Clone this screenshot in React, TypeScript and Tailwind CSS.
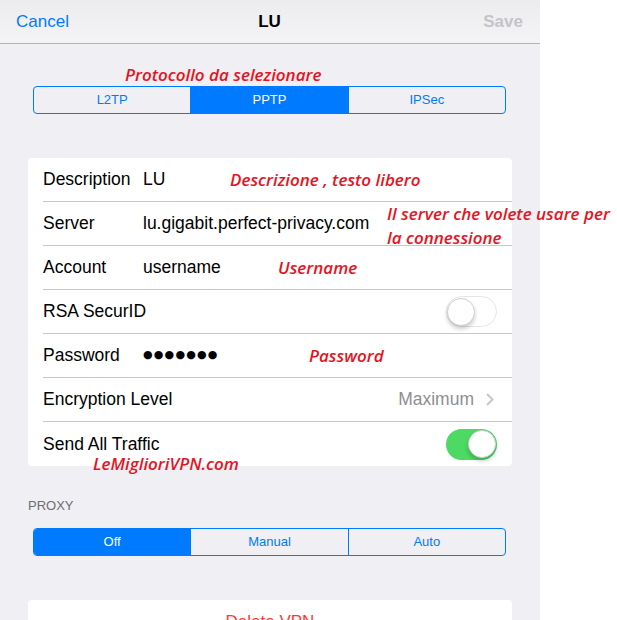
import React from "react"

const ios = { fontFamily: '"Liberation Sans", Arial, sans-serif' }
const note = { fontFamily: '"Open Sans", "DejaVu Sans", sans-serif' }

function Segmented({ items, active }: { items: string[]; active: number }) {
  return (
    <div className="mx-[33px] flex h-[28px] w-[473px] overflow-hidden rounded-[4px] border border-[#007aff]">
      {items.map((item, i) => (
        <div
          key={item}
          className={
            "flex flex-1 items-center justify-center text-[13px] " +
            (i > 0 ? "border-l border-[#007aff] " : "") +
            (i === active ? "bg-[#007aff] text-white" : "text-[#007aff]")
          }
        >
          {item}
        </div>
      ))}
    </div>
  )
}

function Toggle({ on }: { on: boolean }) {
  return (
    <div
      className={
        "relative h-[31px] w-[51px] rounded-full " +
        (on ? "bg-[#4cd964]" : "border border-[#e5e5ea] bg-white")
      }
    >
      <div
        className={
          "absolute top-[1px] h-[28px] w-[28px] rounded-full border border-[#d0d0d4] bg-white shadow-[0_3px_4px_rgba(0,0,0,0.2)] " +
          (on ? "right-[1px]" : "left-0")
        }
      />
    </div>
  )
}

function Row({ label, children, last }: { label: string; children?: React.ReactNode; last?: boolean }) {
  return (
    <div className="pl-[15px]">
      <div
        className={
          "flex h-[44px] items-center whitespace-nowrap pr-[15px] text-[17.5px] text-black " +
          (last ? "" : "border-b border-[#c8c7cc]")
        }
      >
        <span className="min-w-[100px] shrink-0">{label}</span>
        {children}
      </div>
    </div>
  )
}

export default function App() {
  return (
    <div className="relative flex h-[620px] w-[617px] overflow-hidden bg-white" style={ios}>
      <div className="h-[620px] w-[540px] shrink-0 bg-[#efeff4]">
        <div className="flex h-[44px] items-center justify-between border-b border-[#b2b2b2] bg-gradient-to-b from-[#ececee] to-[#f4f4f7] pl-[16px] pr-[17px] pt-[1px] text-[17px]">
          <span className="w-[60px] text-[#007aff]">Cancel</span>
          <span className="font-bold text-black">LU</span>
          <span className="w-[60px] text-right font-bold text-[#c4c4c8]">Save</span>
        </div>

        <div className="mt-[42px]">
          <Segmented items={["L2TP", "PPTP", "IPSec"]} active={1} />
        </div>

        <div className="mx-[28px] mt-[44px] overflow-hidden rounded-[4px] bg-white">
          <Row label="Description">
            <span>LU</span>
          </Row>
          <Row label="Server">
            <span>lu.gigabit.perfect-privacy.com</span>
          </Row>
          <Row label="Account">
            <span>username</span>
          </Row>
          <Row label="RSA SecurID">
            <div className="ml-auto">
              <Toggle on={false} />
            </div>
          </Row>
          <Row label="Password">
            <span className="text-[11px] tracking-[1.2px]" style={{ fontFamily: '"DejaVu Sans", sans-serif' }}>
              ●●●●●●●
            </span>
          </Row>
          <Row label="Encryption Level">
            <span className="ml-auto text-[#8e8e93]">Maximum</span>
            <svg className="ml-[12px] mr-[3px]" width="8" height="13" viewBox="0 0 8 13" fill="none">
              <path d="M1 1l5.5 5.5L1 12" stroke="#c7c7cc" strokeWidth="2" />
            </svg>
          </Row>
          <Row label="Send All Traffic" last>
            <div className="ml-auto">
              <Toggle on />
            </div>
          </Row>
        </div>

        <div className="ml-[28px] mt-[32px] h-[16px] text-[13px] leading-[16px] text-[#6d6d72]">PROXY</div>

        <div className="mt-[14px]">
          <Segmented items={["Off", "Manual", "Auto"]} active={0} />
        </div>

        <div className="mx-[28px] mt-[44px] flex h-[44px] items-center justify-center rounded-[4px] bg-white text-[17px] text-[#ff3b30]">
          Delete VPN
        </div>
      </div>

      <div
        className="pointer-events-none absolute inset-0 text-[17px] font-semibold italic leading-[24px] text-[#e5141f]"
        style={note}
      >
        <span className="absolute left-[125px] top-[63px]">Protocollo da selezionare</span>
        <span className="absolute left-[230px] top-[168px]">Descrizione , testo libero</span>
        <span className="absolute left-[387px] top-[202px] whitespace-nowrap">
          Il server che volete usare per
          <br />
          la connessione
        </span>
        <span className="absolute left-[278px] top-[256px]">Username</span>
        <span className="absolute left-[309px] top-[344px]">Password</span>
        <span className="absolute left-[93px] top-[452px]">LeMiglioriVPN.com</span>
      </div>
    </div>
  )
}
